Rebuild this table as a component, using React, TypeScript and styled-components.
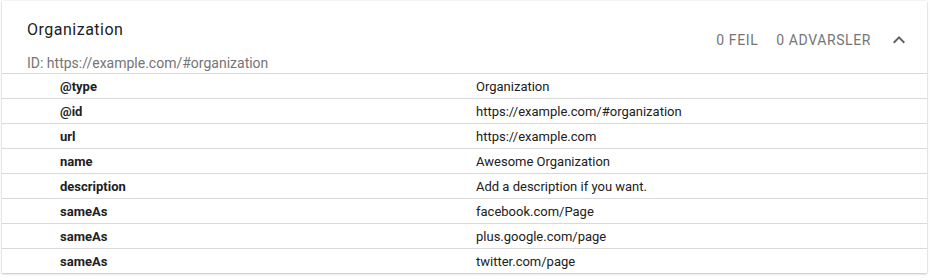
import React from "react";
import styled, { createGlobalStyle } from "styled-components";

const GlobalStyle = createGlobalStyle`
  html, body {
    margin: 0;
    padding: 0;
    background: #ffffff;
    font-family: Roboto, "Noto Sans", Arial, sans-serif;
    -webkit-font-smoothing: antialiased;
  }
`;

const Page = styled.div`
  padding: 1px 4px 6px 2px;
`;

const Card = styled.section`
  background: #fff;
  box-shadow: 0 1px 2px rgba(0, 0, 0, 0.22), 0 0 1px rgba(0, 0, 0, 0.2);
`;

const Header = styled.header`
  display: flex;
  align-items: flex-start;
  justify-content: space-between;
  padding: 20px 22px 0 25px;
  height: 52px;
`;

const TitleBlock = styled.div`
  display: flex;
  flex-direction: column;
`;

const Title = styled.h2`
  margin: 0;
  font-size: 16px;
  font-weight: 400;
  letter-spacing: 0.5px;
  line-height: 18px;
  color: #212121;
`;

const EntityId = styled.div`
  margin-top: 16px;
  font-size: 14px;
  line-height: 16px;
  color: #757575;
`;

const Summary = styled.div`
  display: flex;
  align-items: center;
  margin-top: 7px;
  gap: 18px;
  height: 24px;
`;

const Count = styled.span`
  font-size: 14px;
  letter-spacing: 0.6px;
  text-transform: uppercase;
  color: #757575;
`;

const ToggleButton = styled.button`
  display: flex;
  align-items: center;
  justify-content: center;
  width: 12px;
  height: 24px;
  margin-left: 4px;
  padding: 0;
  border: 0;
  background: transparent;
  color: #616161;
  cursor: pointer;
`;

const Table = styled.div`
  display: flex;
  flex-direction: column;
`;

const Row = styled.div`
  display: grid;
  grid-template-columns: 416px 1fr;
  height: 25px;
  align-items: center;
  padding-left: 58px;
  border-top: 1px solid #d9d9d9;
  box-sizing: border-box;
`;

const Key = styled.span`
  font-size: 13px;
  font-weight: 700;
  color: #212121;
`;

const Value = styled.span`
  font-size: 13px;
  color: #212121;
`;

const rows: [string, string][] = [
  ["@type", "Organization"],
  ["@id", "https://example.com/#organization"],
  ["url", "https://example.com"],
  ["name", "Awesome Organization"],
  ["description", "Add a description if you want."],
  ["sameAs", "facebook.com/Page"],
  ["sameAs", "plus.google.com/page"],
  ["sameAs", "twitter.com/page"],
];

export default function App() {
  return (
    <Page>
      <GlobalStyle />
      <Card>
        <Header>
          <TitleBlock>
            <Title>Organization</Title>
            <EntityId>ID: https://example.com/#organization</EntityId>
          </TitleBlock>
          <Summary>
            <Count>0 feil</Count>
            <Count>0 advarsler</Count>
            <ToggleButton aria-label="Skjul">
              <svg width="12" height="24" viewBox="6 0 12 24">
                <path
                  d="M7.41 15.41L12 10.83l4.59 4.58L18 14l-6-6-6 6z"
                  fill="currentColor"
                />
              </svg>
            </ToggleButton>
          </Summary>
        </Header>
        <Table>
          {rows.map(([k, v], i) => (
            <Row key={i}>
              <Key>{k}</Key>
              <Value>{v}</Value>
            </Row>
          ))}
        </Table>
      </Card>
    </Page>
  );
}
